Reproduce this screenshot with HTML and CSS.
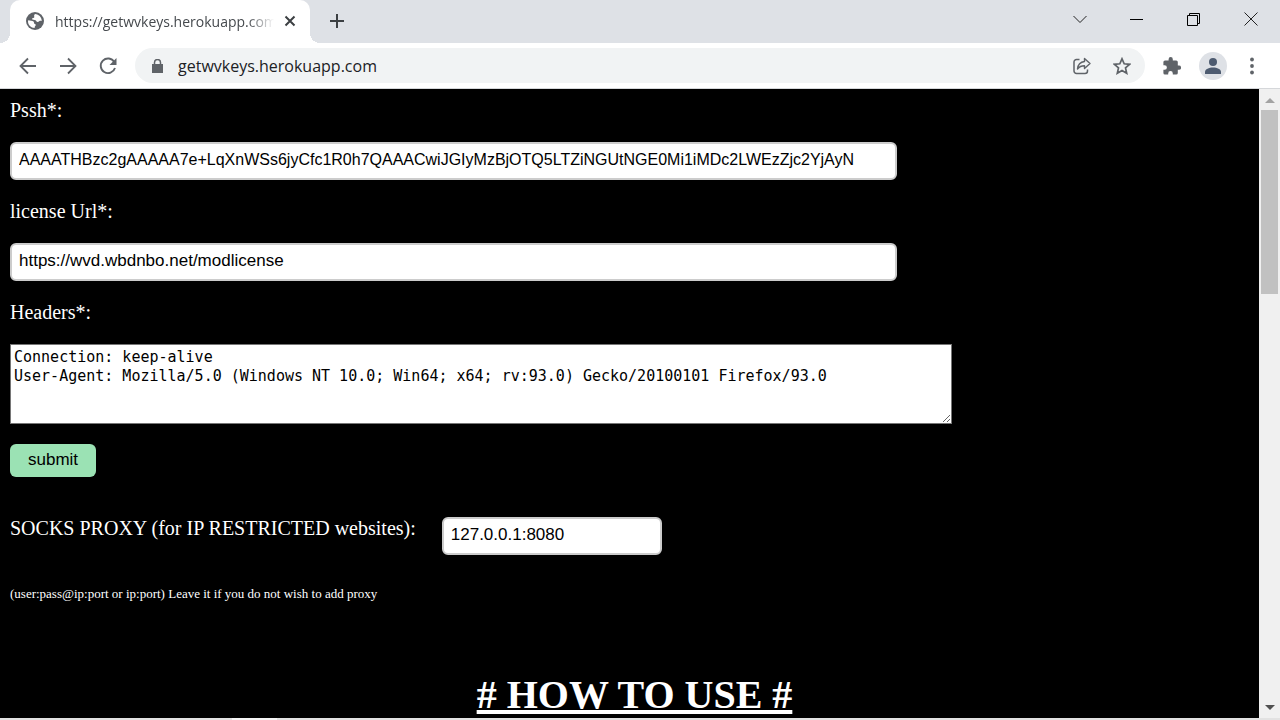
FILE: index.html
```
<!DOCTYPE html>
<html lang="en">
<head>
  <meta charset="UTF-8">
  <meta name="viewport" content="width=device-width, initial-scale=1.0">
  <title>getwvkeys.herokuapp.com</title>
  <link rel="stylesheet" href="styles.css">
</head>
<body>

  <header class="browser">
    <div class="tab-strip">
      <div class="tab">
        <svg class="favicon" width="18" height="18" viewBox="0 0 18 18">
          <circle cx="9" cy="9" r="9" fill="#5f6368"/>
          <path d="M9.5 2c-2 .6-1.2 2.200-1.200 3.200 0 .8-2.300.5-2.300 1.800 0 1 2.600.7 3.500 1.200 1 .6.700 1.800 2.200 1.800 1.200 0 1.300-1.300 2.300-1.300h1.900C15.300 4.700 12.800 2.400 9.500 2z" fill="#fff"/>
          <path d="M2.200 8.200c1.800.2 4.300.6 5.300 1.400.8.7.2 1.600.9 2.100.7.400 1.400.300 1.400 1.200 0 .8-1.200 1-1.200 3C5 15.900 2 13 2 9.200z" fill="#fff"/>
        </svg>
        <span class="tab-title">https://getwvkeys.herokuapp.com</span>
        <button class="tab-close" type="button" aria-label="Close tab">
          <svg width="12" height="12" viewBox="0 0 12 12"><path d="M1.500 1.500l9 9M10.500 1.500l-9 9" stroke="#3c4043" stroke-width="2"/></svg>
        </button>
      </div>
      <button class="new-tab" type="button" aria-label="New tab">
        <svg width="16" height="16" viewBox="0 0 16 16"><path d="M8 1v14M1 8h14" stroke="#3c4043" stroke-width="2"/></svg>
      </button>
      <div class="window-buttons">
        <button type="button" aria-label="Search tabs"><svg width="14" height="14" viewBox="0 0 14 14"><path d="M.5 4l6.500 6.500L13.500 4" fill="none" stroke="#222"/></svg></button>
        <button type="button" aria-label="Minimize"><svg width="14" height="14" viewBox="0 0 14 14"><path d="M0 7.500h13" stroke="#000"/></svg></button>
        <button type="button" aria-label="Restore"><svg width="14" height="14" viewBox="0 0 14 14"><path d="M.5 3.500h10v10H.5zM2.500 3.500v-2h10v10h-2" fill="none" stroke="#000"/></svg></button>
        <button type="button" aria-label="Close"><svg width="14" height="14" viewBox="0 0 14 14"><path d="M.5.5l13 13M13.500.5l-13 13" stroke="#222"/></svg></button>
      </div>
    </div>

    <div class="toolbar">
      <button class="nav" type="button" aria-label="Back"><svg width="18" height="18" viewBox="0 0 18 18"><path d="M17 9H2M9 1.500L1.500 9 9 16.500" fill="none" stroke="#5f6368" stroke-width="1.800"/></svg></button>
      <button class="nav" type="button" aria-label="Forward"><svg width="18" height="18" viewBox="0 0 18 18"><path d="M1 9h15M9 1.500L16.500 9 9 16.500" fill="none" stroke="#5f6368" stroke-width="1.800"/></svg></button>
      <button class="nav" type="button" aria-label="Reload"><svg width="18" height="18" viewBox="0 0 18 18"><path d="M15.300 5A7.300 7.300 0 1 0 16 11" fill="none" stroke="#5f6368" stroke-width="1.900"/><path d="M17.500 1v7h-7z" fill="#5f6368"/></svg></button>
      <div class="address">
        <svg class="lock" width="11" height="14" viewBox="0 0 11 14"><path d="M0 5h11v9H0z" fill="#5f6368"/><path d="M2.500 6V3.500a3 3 0 0 1 6 0V6" fill="none" stroke="#5f6368" stroke-width="1.500"/></svg>
        <input type="text" class="address-text" aria-label="Address" value="getwvkeys.herokuapp.com">
        <button type="button" aria-label="Share"><svg width="18" height="18" viewBox="0 0 18 18"><path d="M6.500 2.500H3.500a2.500 2.500 0 0 0-2.500 2.500v9a2.500 2.500 0 0 0 2.500 2.500H12a2.500 2.500 0 0 0 2.500-2.500v-1.500" fill="none" stroke="#5f6368" stroke-width="1.500"/><path d="M11.500 1.500l5.500 5-5.500 5V8.800C8.500 8.800 6.300 9.700 4.500 12c.4-4 2.600-7 7-7.500z" fill="none" stroke="#5f6368" stroke-width="1.400" stroke-linejoin="round"/></svg></button>
        <button type="button" aria-label="Bookmark"><svg width="18" height="18" viewBox="0 0 18 18"><path d="M9 1.800l2.200 5 5.400.5-4.100 3.600 1.200 5.300L9 13.400l-4.700 2.800 1.200-5.300L1.400 7.300l5.400-.5z" fill="none" stroke="#5f6368" stroke-width="1.700"/></svg></button>
      </div>
      <div class="actions">
        <button type="button" aria-label="Extensions"><svg width="18" height="18" viewBox="0 0 18 18"><path d="M16 8.600h-1.200V5a1.600 1.600 0 0 0-1.600-1.600H9.800V2.200a2.100 2.100 0 0 0-4.200 0v1.200H2A1.600 1.600 0 0 0 .4 5v3.200h1.200a2.300 2.300 0 0 1 0 4.600H.4V16A1.600 1.600 0 0 0 2 17.600h3.200v-1.200a2.300 2.300 0 0 1 4.600 0v1.200h3.400a1.600 1.600 0 0 0 1.600-1.600v-3.200H16a2.100 2.100 0 0 0 0-4.200z" fill="#5f6368"/></svg></button>
        <button type="button" aria-label="Profile"><svg width="28" height="28" viewBox="0 0 28 28"><circle cx="14" cy="14" r="14" fill="#dee1e6"/><circle cx="14" cy="10" r="4" fill="#4d5b70"/><path d="M6 22v-2c0-3 4-4.500 8-4.500s8 1.500 8 4.500v2z" fill="#4d5b70"/></svg></button>
        <button class="menu" type="button" aria-label="Menu"><svg width="4" height="18" viewBox="0 0 4 18"><g fill="#5f6368"><circle cx="2" cy="2.500" r="1.900"/><circle cx="2" cy="9" r="1.900"/><circle cx="2" cy="15.500" r="1.900"/></g></svg></button>
      </div>
    </div>
  </header>

  <div class="viewport">
    <main class="page">
      <form>
        <label for="pssh">Pssh*:</label>
        <input type="text" class="long" id="pssh" value="AAAATHBzc2gAAAAA7e+LqXnWSs6jyCfc1R0h7QAAACwiJGIyMzBjOTQ5LTZiNGUtNGE0Mi1iMDc2LWEzZjc2YjAyN">

        <label for="license">license Url*:</label>
        <input type="text" id="license" value="https://wvd.wbdnbo.net/modlicense">

        <label for="headers">Headers*:</label>
        <textarea id="headers">Connection: keep-alive
User-Agent: Mozilla/5.0 (Windows NT 10.0; Win64; x64; rv:93.0) Gecko/20100101 Firefox/93.0</textarea>

        <button class="submit" type="submit">submit</button>

        <div class="proxy">
          <label for="proxy">SOCKS PROXY (for IP RESTRICTED websites):</label>
          <input type="text" id="proxy" value="127.0.0.1:8080">
        </div>
        <p class="note">(user:pass@ip:port or ip:port) Leave it if you do not wish to add proxy</p>
      </form>

      <h1># HOW TO USE #</h1>
    </main>

    <div class="scrollbar">
      <svg width="10" height="5" viewBox="0 0 10 5"><path d="M0 5l5-5 5 5z" fill="#a3a3a3"/></svg>
      <div class="thumb"></div>
      <svg class="down" width="10" height="5" viewBox="0 0 10 5"><path d="M0 0l5 5 5-5z" fill="#505050"/></svg>
    </div>
  </div>

  <footer class="taskbar"><div class="task-active"></div></footer>

</body>
</html>
```
FILE: styles.css
```
* {
  box-sizing: border-box;
}
body {
  margin: 0;
  height: 100vh;
  display: flex;
  flex-direction: column;
  overflow: hidden;
  font-family: "Liberation Serif", serif;
}
svg {
  display: block;
}

/* browser frame */
.browser {
  font-family: "Open Sans", sans-serif;
  background: #fff;
  border-bottom: 1px solid #d5d7da;
}
.browser button {
  display: flex;
  align-items: center;
  justify-content: center;
  padding: 0;
  border: none;
  background: none;
}
.tab-strip {
  display: flex;
  height: 43px;
  padding: 0 1px 0 10px;
  background: #dee1e6;
}
.tab {
  position: relative;
  display: flex;
  align-items: center;
  width: 300px;
  padding: 0 14px 1px 16px;
  background: #fff;
  border-radius: 10px 10px 0 0;
}
/* curved feet of the tab */
.tab::before,
.tab::after {
  content: "";
  position: absolute;
  bottom: 0;
  width: 10px;
  height: 10px;
}
.tab::before {
  left: -10px;
  background: radial-gradient(circle at 0 0, transparent 10px, #fff 10px);
}
.tab::after {
  right: -10px;
  background: radial-gradient(circle at 100% 0, transparent 10px, #fff 10px);
}
.tab-title {
  flex: 1;
  min-width: 0;
  margin: 0 10px 0 11px;
  overflow: hidden;
  white-space: nowrap;
  font-size: 14px;
  color: #45494d;
  -webkit-mask-image: linear-gradient(to right, #000 88%, transparent);
  mask-image: linear-gradient(to right, #000 88%, transparent);
}
.browser .new-tab {
  width: 54px;
  padding-bottom: 1px;
}
.window-buttons {
  display: flex;
  height: 37px;
  margin-left: auto;
}
.window-buttons button {
  width: 57px;
}
.toolbar {
  display: flex;
  align-items: center;
  height: 45px;
  padding: 0 21px 0 8px;
}
.nav {
  width: 40px;
  height: 36px;
}
.address {
  flex: 1;
  display: flex;
  align-items: center;
  gap: 22px;
  height: 35px;
  margin-left: 7px;
  padding: 0 14px 0 17px;
  background: #f1f3f4;
  border-radius: 18px;
}
.address-text {
  flex: 1;
  min-width: 0;
  margin-left: -7px;
  padding: 0;
  border: none;
  background: none;
  font-family: inherit;
  font-size: 16px;
  color: #202124;
}
.actions {
  display: flex;
  align-items: center;
  gap: 18px;
  padding-left: 18px;
}
.menu {
  width: 14px;
}

/* page */
.viewport {
  flex: 1;
  min-height: 0;
  display: flex;
  background: #000;
}
.page {
  flex: 1;
  overflow: hidden;
  padding: 10px 0 0 10px;
  color: #fff;
}
label {
  display: block;
  font-size: 20px;
  line-height: 23px;
}
input,
textarea {
  display: block;
  color: #000;
}
.page input {
  width: 71%;
  height: 38px;
  margin: 20px 0;
  padding: 0 7px 2px;
  border: 2px solid #ccc;
  border-radius: 6px;
  font-family: "Liberation Sans", Arial, sans-serif;
  font-size: 17px;
}
.page .long {
  font-size: 16px;
}
textarea {
  width: 942px;
  max-width: 100%;
  height: 80px;
  margin: 20px 0;
  padding: 3px;
  border: 1px solid #767676;
  font-family: Consolas, "DejaVu Sans Mono", monospace;
  font-size: 15px;
  line-height: 19px;
}
.submit {
  display: block;
  height: 33px;
  padding: 0 18px 2px;
  border: none;
  border-radius: 6px;
  background: #9be2b4;
  color: #000;
  font-family: "Liberation Sans", Arial, sans-serif;
  font-size: 17px;
}
.proxy {
  display: flex;
  gap: 26px;
  margin-top: 40px;
}
.page .proxy input {
  width: 220px;
  margin: 0;
}
.note {
  margin: 31px 0 0;
  font-size: 13px;
  line-height: 16px;
}
h1 {
  margin: 70px 0 0;
  text-align: center;
  text-decoration: underline;
  font-size: 40px;
  line-height: 46px;
}

.scrollbar {
  display: flex;
  flex-direction: column;
  align-items: center;
  width: 21px;
  padding: 9px 2px 8px;
  background: #f0f0f0;
}
.thumb {
  width: 100%;
  height: 30%;
  margin-top: 7px;
  background: #c1c1c1;
}
.down {
  margin-top: auto;
}
.taskbar {
  height: 2px;
  padding-left: 232px;
  background: #e2e2e2;
}
.task-active {
  width: 45px;
  height: 2px;
  background: #f5f5f5;
}
```
